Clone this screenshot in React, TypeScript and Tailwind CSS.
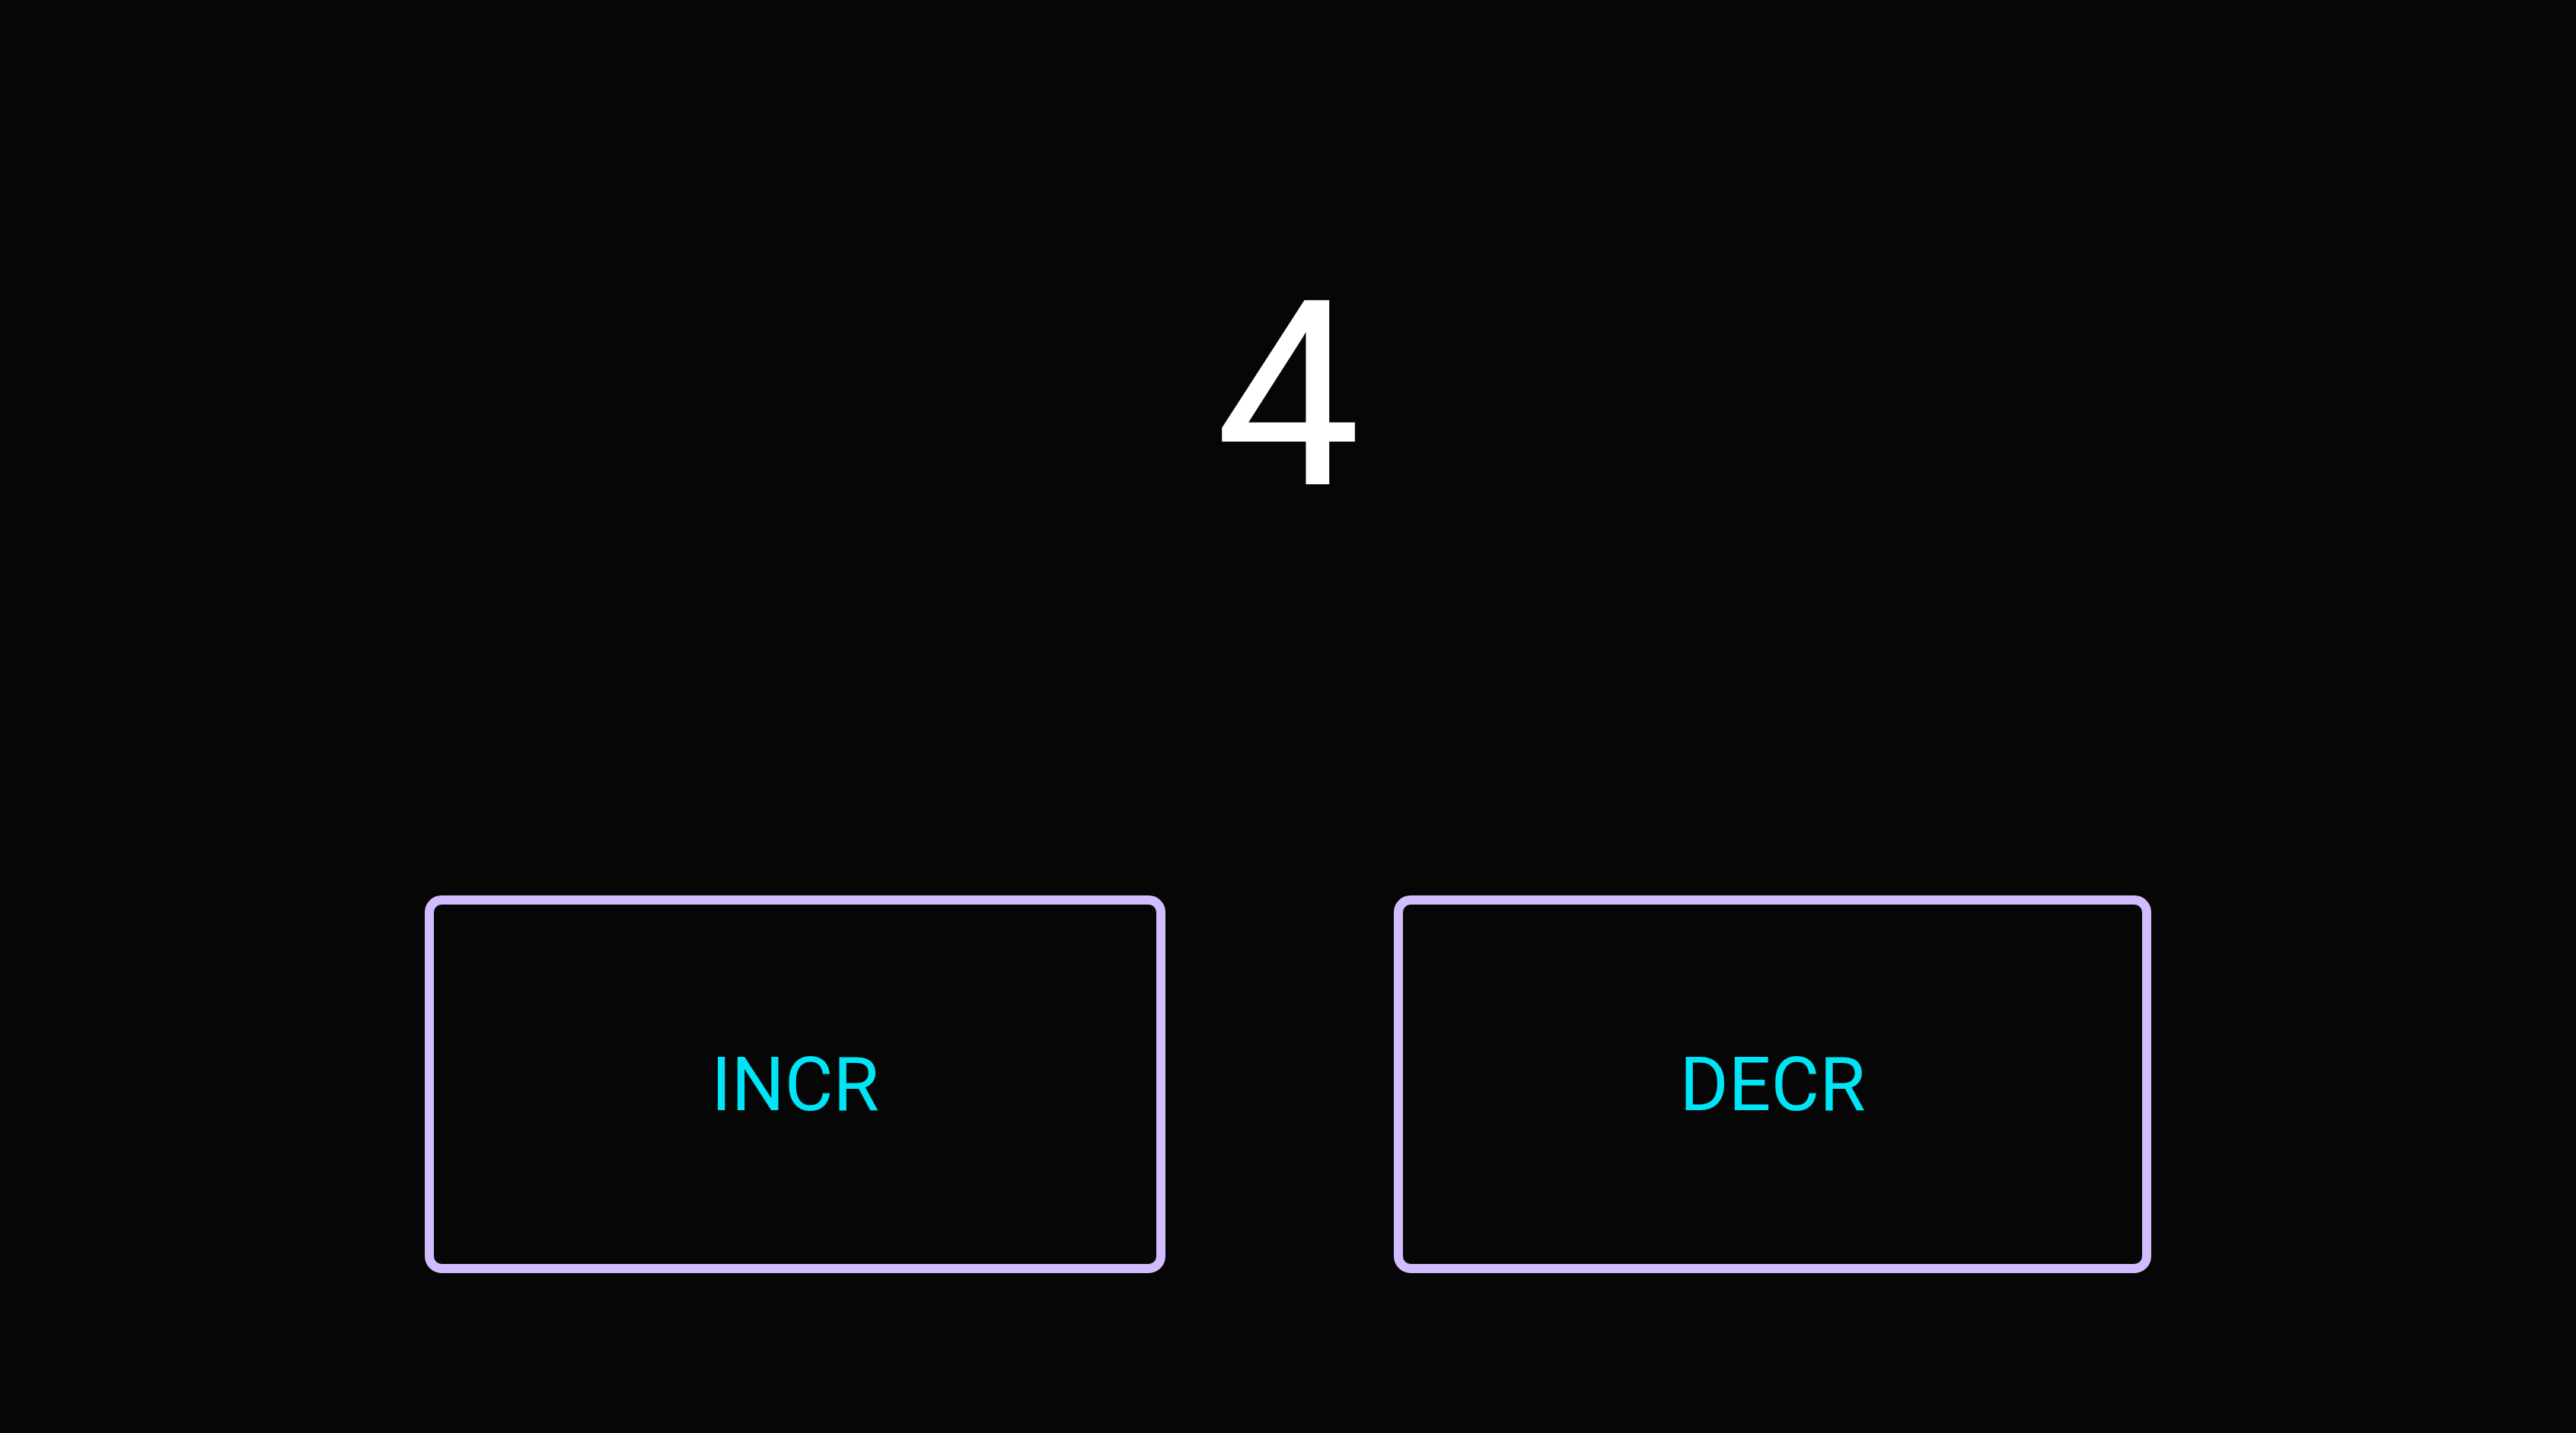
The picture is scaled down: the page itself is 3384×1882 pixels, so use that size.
import React, { useState } from "react";

export default function App() {
  const [count, setCount] = useState(4);
  return (
    <div className="w-[3384px] h-[1882px] bg-[#060606] flex flex-col items-center font-['Roboto',sans-serif]">
      <div className="pt-[350px] text-[340px] leading-none font-normal text-white">{count}</div>
      <div className="mt-[486px] flex gap-[300px]">
        <button
          onClick={() => setCount(count + 1)}
          className="w-[973px] h-[496px] border-[12px] border-[#d0bcff] rounded-[22px] flex items-center justify-center text-[98px] text-[#00e5f5] bg-transparent"
        >
          INCR
        </button>
        <button
          onClick={() => setCount(count - 1)}
          className="w-[995px] h-[496px] border-[12px] border-[#d0bcff] rounded-[22px] flex items-center justify-center text-[98px] text-[#00e5f5] bg-transparent"
        >
          DECR
        </button>
      </div>
    </div>
  );
}
